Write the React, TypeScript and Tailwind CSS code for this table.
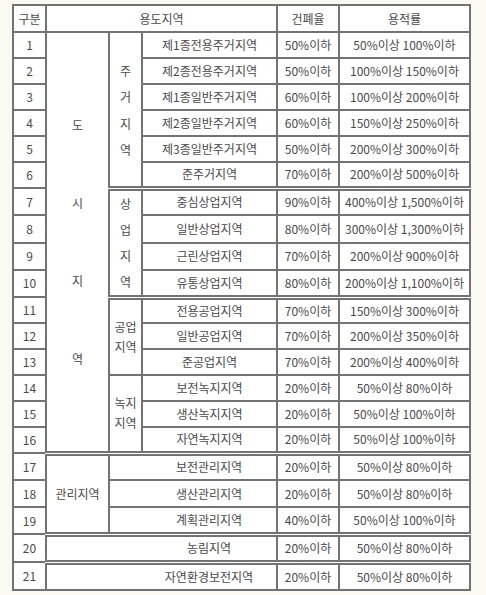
const LINE = "border-2 border-[#737373]";
const DBL = "[border-top-style:double] border-t-[5px]";

type Row = { no: number; name: string; bcr: string; far: string };

const ROWS: Row[] = [
  { no: 1, name: "제1종전용주거지역", bcr: "50%이하", far: "50%이상 100%이하" },
  { no: 2, name: "제2종전용주거지역", bcr: "50%이하", far: "100%이상 150%이하" },
  { no: 3, name: "제1종일반주거지역", bcr: "60%이하", far: "100%이상 200%이하" },
  { no: 4, name: "제2종일반주거지역", bcr: "60%이하", far: "150%이상 250%이하" },
  { no: 5, name: "제3종일반주거지역", bcr: "50%이하", far: "200%이상 300%이하" },
  { no: 6, name: "준주거지역", bcr: "70%이하", far: "200%이상 500%이하" },
  { no: 7, name: "중심상업지역", bcr: "90%이하", far: "400%이상 1,500%이하" },
  { no: 8, name: "일반상업지역", bcr: "80%이하", far: "300%이상 1,300%이하" },
  { no: 9, name: "근린상업지역", bcr: "70%이하", far: "200%이상 900%이하" },
  { no: 10, name: "유통상업지역", bcr: "80%이하", far: "200%이상 1,100%이하" },
  { no: 11, name: "전용공업지역", bcr: "70%이하", far: "150%이상 300%이하" },
  { no: 12, name: "일반공업지역", bcr: "70%이하", far: "200%이상 350%이하" },
  { no: 13, name: "준공업지역", bcr: "70%이하", far: "200%이상 400%이하" },
  { no: 14, name: "보전녹지지역", bcr: "20%이하", far: "50%이상 80%이하" },
  { no: 15, name: "생산녹지지역", bcr: "20%이하", far: "50%이상 100%이하" },
  { no: 16, name: "자연녹지지역", bcr: "20%이하", far: "50%이상 100%이하" },
  { no: 17, name: "보전관리지역", bcr: "20%이하", far: "50%이상 80%이하" },
  { no: 18, name: "생산관리지역", bcr: "20%이하", far: "50%이상 80%이하" },
  { no: 19, name: "계획관리지역", bcr: "40%이하", far: "50%이상 100%이하" },
  { no: 20, name: "농림지역", bcr: "20%이하", far: "50%이상 80%이하" },
  { no: 21, name: "자연환경보전지역", bcr: "20%이하", far: "50%이상 80%이하" },
];

// rows whose top edge is a double rule (from the sub-group column onward)
const DOUBLE_TOP = new Set([7, 11, 17, 20, 21]);

function rowHeight(no: number) {
  if (no >= 20) return "h-[28px]";
  if (no >= 17) return "h-[27px]";
  return "h-[26px]";
}

export default function App() {
  return (
    <div
      className="min-h-[595px] w-[486px] bg-[#fafaf3] pl-[12px] pt-[4px]"
      style={{ fontFamily: '"Noto Sans CJK KR", "Noto Sans", sans-serif' }}
    >
      <table className="table-fixed border-collapse bg-white text-center text-[12px] leading-none text-[#4a4a4a]">
        <colgroup>
          <col className="w-[33px]" />
          <col className="w-[63px]" />
          <col className="w-[33px]" />
          <col className="w-[135px]" />
          <col className="w-[62px]" />
          <col className="w-[131px]" />
        </colgroup>
        <thead>
          <tr className="h-[27px]">
            <th className={`${LINE} p-0 font-normal`}>구분</th>
            <th colSpan={3} className={`${LINE} p-0 font-normal`}>용도지역</th>
            <th className={`${LINE} p-0 font-normal`}>건폐율</th>
            <th className={`${LINE} p-0 font-normal`}>용적률</th>
          </tr>
        </thead>
        <tbody>
          {ROWS.map((r) => {
            const dbl = DOUBLE_TOP.has(r.no) ? DBL : "";
            return (
              <tr key={r.no} className={rowHeight(r.no)}>
                <td className={`${LINE} p-0`}>{r.no}</td>

                {/* 도시지역 */}
                {r.no === 1 && (
                  <td rowSpan={16} className={`${LINE} p-0`}>
                    <div className="flex flex-col items-center gap-[66px]">
                      {["도", "시", "지", "역"].map((c) => (
                        <span key={c}>{c}</span>
                      ))}
                    </div>
                  </td>
                )}
                {r.no === 1 && (
                  <td rowSpan={6} className={`${LINE} p-0`}>
                    <div className="flex flex-col items-center pt-[3px]">
                      {["주", "거", "지", "역"].map((c) => (
                        <span key={c} className="leading-[26.5px]">{c}</span>
                      ))}
                    </div>
                  </td>
                )}
                {r.no === 7 && (
                  <td rowSpan={4} className={`${LINE} ${dbl} p-0`}>
                    <div className="flex flex-col items-center">
                      {["상", "업", "지", "역"].map((c) => (
                        <span key={c} className="leading-[26px]">{c}</span>
                      ))}
                    </div>
                  </td>
                )}
                {r.no === 11 && (
                  <td rowSpan={3} className={`${LINE} ${dbl} p-0 leading-[20px]`}>
                    공업
                    <br />
                    지역
                  </td>
                )}
                {r.no === 14 && (
                  <td rowSpan={3} className={`${LINE} p-0 leading-[20px]`}>
                    녹지
                    <br />
                    지역
                  </td>
                )}
                {r.no === 17 && (
                  <td rowSpan={3} className={`${LINE} ${dbl} p-0`}>관리지역</td>
                )}

                {r.no <= 16 && <td className={`${LINE} ${dbl} p-0`}>{r.name}</td>}
                {r.no >= 17 && r.no <= 19 && (
                  <td colSpan={2} className={`${LINE} ${dbl} p-0 pl-[32px]`}>{r.name}</td>
                )}
                {r.no >= 20 && (
                  <td colSpan={3} className={`${LINE} ${dbl} p-0 pl-[95px]`}>{r.name}</td>
                )}

                <td className={`${LINE} ${dbl} p-0`}>{r.bcr}</td>
                <td className={`${LINE} ${dbl} p-0`}>{r.far}</td>
              </tr>
            );
          })}
        </tbody>
      </table>
    </div>
  );
}
